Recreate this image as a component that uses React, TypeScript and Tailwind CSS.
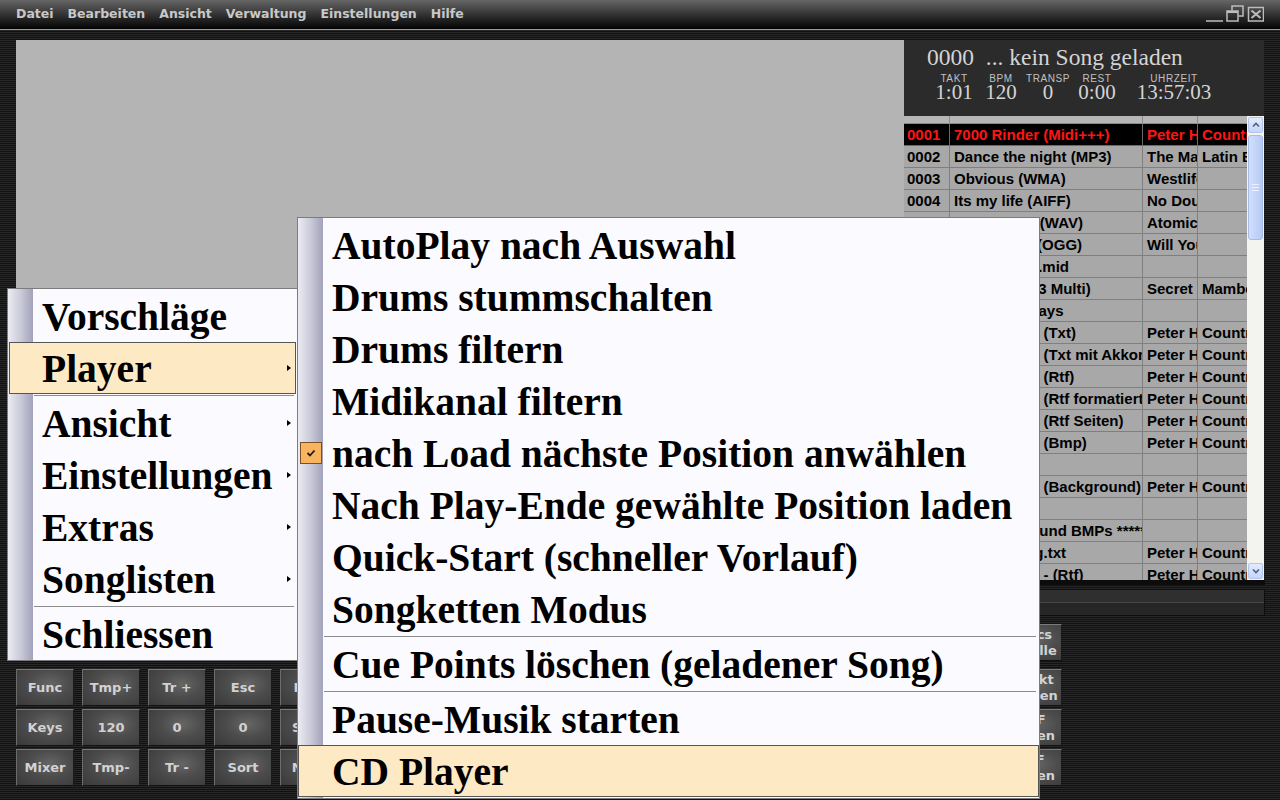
import type { ReactNode } from "react";

type Row = [string, string, string, string];

const songs: Row[] = [
  ["0001", "7000 Rinder (Midi+++)", "Peter Hammer", "Country"],
  ["0002", "Dance the night (MP3)", "The Mambos", "Latin Beat"],
  ["0003", "Obvious (WMA)", "Westlife", ""],
  ["0004", "Its my life (AIFF)", "No Doubt", ""],
  ["0005", "Feels Good (WAV)", "Atomic Kitten", ""],
  ["0006", "Your Game (OGG)", "Will Young", ""],
  ["0007", "Demo-Song.mid", "", ""],
  ["0008", "Mambo (MP3 Multi)", "Secret Service", "Mambo"],
  ["0009", "Lyrics Displays", "", ""],
  ["0010", "Lyrics Song (Txt)", "Peter Hammer", "Country"],
  ["0011", "Lyrics Song (Txt mit Akkorden)", "Peter Hammer", "Country"],
  ["0012", "Lyrics Song (Rtf)", "Peter Hammer", "Country"],
  ["0013", "Lyrics Song (Rtf formatiert)", "Peter Hammer", "Country"],
  ["0014", "Lyrics Song (Rtf Seiten)", "Peter Hammer", "Country"],
  ["0015", "Lyrics Song (Bmp)", "Peter Hammer", "Country"],
  ["", "", "", ""],
  ["0017", "Lyrics Song (Background)", "Peter Hammer", "Country"],
  ["", "", "", ""],
  ["0019", "***** Lyrics  und BMPs *****", "", ""],
  ["0020", "Lyrics_Song.txt", "Peter Hammer", "Country"],
  ["0021", "Lyrics Song - (Rtf)", "Peter Hammer", "Country"],
];

const stats = [
  { label: "TAKT", value: "1:01", w: "w-[44px]" },
  { label: "BPM", value: "120", w: "w-[50px]" },
  { label: "TRANSP", value: "0", w: "w-[44px]" },
  { label: "REST", value: "0:00", w: "w-[54px]" },
  { label: "UHRZEIT", value: "13:57:03", w: "w-[100px]" },
];

const padLabels = ["Func", "Tmp+", "Tr +", "Esc", "Play", "Keys", "120", "0", "0", "Stop", "Mixer", "Tmp-", "Tr -", "Sort", "Next"];

const sideButtons = [
  ["Lyrics", "Tabelle"],
  ["Direkt", "starten"],
  ["PDF", "zeigen"],
  ["RTF", "zeigen"],
];

function PadButton({ children, className = "" }: { children: ReactNode; className?: string }) {
  return (
    <div
      className={
        "flex flex-col items-center justify-center h-[37px] border border-t-[#7a7a7a] border-l-[#6c6c6c] border-r-[#1a1a1a] border-b-[#121212] bg-[radial-gradient(ellipse_at_58%_40%,#666666_0%,#4c4c4c_45%,#393939_100%)] text-[#d2d2d2] font-bold text-[13px] leading-[16px] " +
        className
      }
    >
      {children}
    </div>
  );
}

function MenuItem({
  label,
  arrow = false,
  active = false,
  checked = false,
  sub = false,
}: {
  label: string;
  arrow?: boolean;
  active?: boolean;
  checked?: boolean;
  sub?: boolean;
}) {
  const activeCls = sub
    ? "border border-[#555555] bg-[#fde9c3]"
    : "mx-[1px] border border-[#555555] bg-[#fde9c3]";
  const lead = active ? (sub ? "w-[33px]" : "w-[32px]") : "w-[34px]";
  return (
    <div className={"flex items-center h-[52px] shrink-0 " + (active ? activeCls : "")}>
      <div className={"shrink-0 flex items-center " + lead}>
        {checked && (
          <div className="ml-[2px] w-[22px] h-[22px] border border-[#7a5026] bg-[#f9b460] flex items-center justify-center">
            <svg width="10" height="8" viewBox="0 0 10 8">
              <path d="M1.5 4 L4 6.5 L8.5 1.5" fill="none" stroke="#1a1a1a" strokeWidth="1.8" />
            </svg>
          </div>
        )}
      </div>
      <span className="mt-[4px] font-['Liberation_Serif',serif] font-bold text-[39.5px] leading-none text-black whitespace-nowrap">
        {label}
      </span>
      {arrow && (
        <div
          className={
            "ml-auto w-0 h-0 border-y-[3px] border-y-transparent border-l-[4px] border-l-black " +
            (active ? "mr-[4px]" : "mr-[6px]")
          }
        />
      )}
    </div>
  );
}

function Separator() {
  return (
    <div className="h-[3px] shrink-0 ml-[26px] mr-[3px] flex items-center">
      <div className="w-full h-px bg-[#8c8c8c]" />
    </div>
  );
}

function ScrollArrow({ up }: { up: boolean }) {
  return (
    <div className="h-[16px] shrink-0 mx-[1px] rounded-[2px] border border-[#b3c5ec] bg-[linear-gradient(180deg,#e3ebfd,#c4d5fa)] flex items-center justify-center">
      <svg width="8" height="6" viewBox="0 0 8 6">
        <path d={up ? "M1 4.5 L4 1.5 L7 4.5" : "M1 1.5 L4 4.5 L7 1.5"} fill="none" stroke="#4d6185" strokeWidth="1.6" />
      </svg>
    </div>
  );
}

export default function App() {
  return (
    <div className="relative w-[1280px] h-[800px] overflow-hidden font-['DejaVu_Sans',sans-serif] bg-[repeating-linear-gradient(180deg,#272727_0px,#272727_1px,#111111_1px,#111111_2px)]">
      {/* title / menu bar */}
      <div className="h-[29px] flex items-center justify-between bg-[linear-gradient(180deg,#666666_0%,#2e2e2e_55%,#030303_100%)]">
        <div className="flex items-center gap-[14px] pl-[16px] text-[12.5px] font-bold text-[#c8c8c8]">
          <span>Datei</span>
          <span>Bearbeiten</span>
          <span>Ansicht</span>
          <span>Verwaltung</span>
          <span>Einstellungen</span>
          <span>Hilfe</span>
        </div>
        <svg width="58" height="29" viewBox="0 0 58 29" className="mr-[16px]">
          <path d="M0 21 H17" stroke="#bdbdbd" strokeWidth="1.5" />
          <path d="M26 10.5 V6 H37 V16 H32.5" fill="none" stroke="#bdbdbd" strokeWidth="1.5" />
          <rect x="21" y="11" width="11" height="10" fill="none" stroke="#bdbdbd" strokeWidth="1.5" />
          <path d="M21 12 H32" stroke="#bdbdbd" strokeWidth="2" />
          <rect x="42.5" y="7.5" width="15" height="13.5" fill="none" stroke="#bdbdbd" strokeWidth="1.5" />
          <path d="M45.5 10.5 L54.5 18 M54.5 10.5 L45.5 18" stroke="#bdbdbd" strokeWidth="2" />
        </svg>
      </div>
      <div className="h-px bg-[#9c9c9c]" />

      <div className="flex pt-[10px]">
        {/* left column */}
        <div className="ml-[16px] w-[888px] flex flex-col">
          <div className="h-[612px] bg-[#b4b4b4]" />
          <div className="mt-[17px] grid grid-cols-[58px_58px_58px_58px_58px] gap-x-[8px] gap-y-[3px]">
            {padLabels.map((l, i) => (
              <PadButton key={i}>{l}</PadButton>
            ))}
          </div>
        </div>

        {/* right column */}
        <div className="w-[361px] flex flex-col">
          <div className="h-[76px] w-[360px] bg-[#2b2b2b] flex flex-col">
            <div className="pt-[3px] pl-[23px] font-['Liberation_Serif',serif] text-[23.5px] leading-[28px] text-[#d4d4d4] whitespace-pre">
              0000  ... kein Song geladen
            </div>
            <div className="mt-[3px] pl-[28px] flex">
              {stats.map((s) => (
                <div key={s.label} className={"flex flex-col items-center " + s.w}>
                  <span className="font-['Liberation_Sans',sans-serif] text-[10px] tracking-[0.6px] leading-[9px] text-[#c0c0c0]">{s.label}</span>
                  <span className="-mt-px font-['Liberation_Serif',serif] text-[21px] leading-[21px] text-[#d4d4d4]">{s.value}</span>
                </div>
              ))}
            </div>
          </div>

          {/* song list */}
          <div className="h-[464px] w-[360px] flex bg-[#a8a8a8] font-['Liberation_Sans',sans-serif] font-bold text-[15px] text-black">
            <div className="w-[343px] flex flex-col overflow-hidden">
              <div className="h-[8px] shrink-0 flex bg-[#b6b6b6] border-b border-[#8a8a8a]">
                <div className="w-[46px] border-r border-[#8a8a8a]" />
                <div className="w-[193px] border-r border-[#8a8a8a]" />
                <div className="w-[55px] border-r border-[#8a8a8a]" />
                <div className="w-[49px]" />
              </div>
              {songs.map((r, i) => {
                const first = i === 0;
                const line = first ? "border-[#6a6a6a]" : "border-[#7f7f7f]";
                return (
                  <div
                    key={i}
                    className={
                      "h-[22px] shrink-0 flex border-b leading-[21px] whitespace-pre " +
                      line +
                      (first ? " bg-black text-[#ff1414]" : "")
                    }
                  >
                    <div className={"w-[46px] shrink-0 pl-[3px] overflow-hidden border-r " + line}>{r[0]}</div>
                    <div className={"w-[193px] shrink-0 pl-[4px] overflow-hidden border-r " + line}>{r[1]}</div>
                    <div className={"w-[55px] shrink-0 pl-[4px] overflow-hidden border-r " + line}>{r[2]}</div>
                    <div className="w-[49px] shrink-0 pl-[4px] overflow-hidden">{r[3]}</div>
                  </div>
                );
              })}
            </div>
            <div className="w-[17px] flex flex-col bg-[#f3f3ef] pt-[1px] pb-[1px]">
              <ScrollArrow up />
              <div className="mt-[2px] mx-[1px] h-[105px] rounded-[3px] border border-[#a6bbe6] bg-[linear-gradient(90deg,#d3defb,#c3d4fa,#b7caf5)] flex flex-col items-center justify-center gap-[2px]">
                <div className="w-[7px] h-px bg-[#eef3ff]" />
                <div className="w-[7px] h-px bg-[#eef3ff]" />
                <div className="w-[7px] h-px bg-[#eef3ff]" />
              </div>
              <div className="flex-1" />
              <ScrollArrow up={false} />
            </div>
          </div>
          <div className="h-[5px] bg-[#0c0c0c]" />

          {/* progress bar */}
          <div className="mt-[4px] h-[27px] border border-[#0e0e0e] flex flex-col">
            <div className="flex-1 bg-[#2f2f2f]" />
            <div className="h-px bg-[#464646]" />
            <div className="flex-1 bg-[#262626]" />
          </div>

          <div className="mt-[8px] ml-[96px] w-[62px] flex flex-col">
            {sideButtons.map((b, i) => (
              <PadButton key={i} className={i === 0 ? "mb-[8px]" : i < 3 ? "mb-[3px]" : ""}>
                <span>{b[0]}</span>
                <span>{b[1]}</span>
              </PadButton>
            ))}
          </div>
        </div>
      </div>

      {/* context menu */}
      <div className="absolute left-[7px] top-[288px] w-[291px] h-[373px] border border-[#7c7c7c] bg-[linear-gradient(90deg,#ececf4_0px,#c6c6d6_14px,#a2a2ba_25px,#fbfaff_25px)] flex flex-col pt-[1px]">
        <MenuItem label="Vorschläge" />
        <MenuItem label="Player" arrow active />
        <Separator />
        <MenuItem label="Ansicht" arrow />
        <MenuItem label="Einstellungen" arrow />
        <MenuItem label="Extras" arrow />
        <MenuItem label="Songlisten" arrow />
        <Separator />
        <MenuItem label="Schliessen" />
      </div>

      {/* submenu */}
      <div className="absolute left-[297px] top-[217px] w-[743px] h-[582px] border border-[#7c7c7c] bg-[linear-gradient(90deg,#ececf4_0px,#c6c6d6_14px,#a2a2ba_25px,#fbfaff_25px)] flex flex-col pt-[1px]">
        <MenuItem sub label="AutoPlay nach Auswahl" />
        <MenuItem sub label="Drums stummschalten" />
        <MenuItem sub label="Drums filtern" />
        <MenuItem sub label="Midikanal filtern" />
        <MenuItem sub checked label="nach Load nächste Position anwählen" />
        <MenuItem sub label="Nach Play-Ende gewählte Position laden" />
        <MenuItem sub label="Quick-Start (schneller Vorlauf)" />
        <MenuItem sub label="Songketten Modus" />
        <Separator />
        <MenuItem sub label="Cue Points löschen (geladener Song)" />
        <Separator />
        <MenuItem sub label="Pause-Musik starten" />
        <MenuItem sub active label="CD Player" />
      </div>
    </div>
  );
}
